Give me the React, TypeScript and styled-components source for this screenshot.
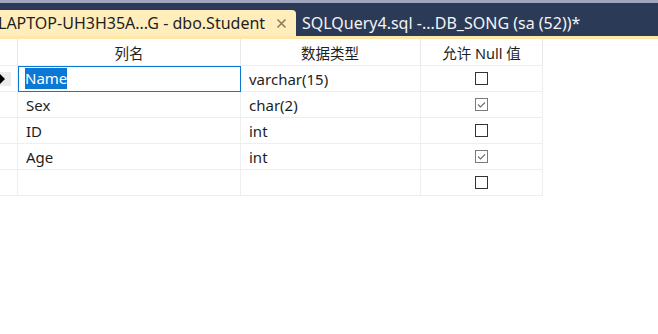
import styled, { createGlobalStyle } from "styled-components";

const Global = createGlobalStyle`
  html, body {
    margin: 0;
    background: #ffffff;
  }
  body {
    font-family: "Noto Sans", "Noto Sans CJK SC", sans-serif;
    color: #1e1e1e;
  }
`;

const TabBar = styled.div`
  display: flex;
  align-items: flex-end;
  height: 36px;
  background: #2b3a57;
  border-top: 3px solid #9ea7bd;
  box-sizing: border-box;
`;

const Tab = styled.div<{ $active?: boolean }>`
  display: flex;
  align-items: center;
  height: 26px;
  padding: 0 9px 0 0;
  margin-left: ${(p) => (p.$active ? "-2px" : "6px")};
  border-radius: 0 4px 0 0;
  background: ${(p) => (p.$active ? "#ffeebc" : "transparent")};
  color: ${(p) => (p.$active ? "#1e1e1e" : "#f4f4f4")};
  font-size: 16px;
  white-space: nowrap;
  width: ${(p) => (p.$active ? "298px" : "auto")};
  box-sizing: border-box;
`;

const Close = styled.svg`
  width: 11px;
  height: 11px;
  flex: none;
  margin-left: auto;
`;

const Strip = styled.div`
  height: 3px;
  background: #ffe8a5;
`;

const Grid = styled.div`
  display: grid;
  grid-template-columns: 18px 223px 180px 122px;
  grid-template-rows: 27px;
  grid-auto-rows: 26px;
  width: 543px;
`;

const HeadCell = styled.div<{ $align?: string }>`
  display: flex;
  align-items: center;
  justify-content: ${(p) => p.$align || "center"};
  font-size: 14.5px;
  border-right: 1px solid #e8e8e8;
  border-bottom: 1px solid #eeeeee;
  box-sizing: border-box;
  padding-left: ${(p) => (p.$align === "flex-start" ? "60px" : "0")};
`;

const Cell = styled.div<{ $selected?: boolean; $center?: boolean }>`
  display: flex;
  align-items: center;
  justify-content: ${(p) => (p.$center ? "center" : "flex-start")};
  padding-left: ${(p) => (p.$center ? "0" : "8px")};
  font-size: 15px;
  border-right: 1px solid #eeeeee;
  border-bottom: 1px solid #eeeeee;
  box-sizing: border-box;
  outline: ${(p) => (p.$selected ? "1px solid #0a78d4" : "none")};
  outline-offset: -1px;
`;

const Gutter = styled.div`
  display: flex;
  align-items: center;
  border-right: 1px solid #eeeeee;
  border-bottom: 1px solid #eeeeee;
  box-sizing: border-box;
`;

const Pointer = styled.div`
  width: 11px;
  height: 14px;
  background: #ececec;
  display: flex;
  align-items: center;
  &::before {
    content: "";
    border-left: 5px solid #000;
    border-top: 5px solid transparent;
    border-bottom: 5px solid transparent;
  }
`;

const Highlight = styled.span`
  background: #0a78d4;
  color: #ffffff;
  padding: 0 0 1px;
  margin-left: -1px;
`;

const Box = styled.svg`
  width: 13px;
  height: 13px;
`;

type Row = { name: string; type: string; nullable: boolean };

const rows: Row[] = [
  { name: "Name", type: "varchar(15)", nullable: false },
  { name: "Sex", type: "char(2)", nullable: true },
  { name: "ID", type: "int", nullable: false },
  { name: "Age", type: "int", nullable: true },
];

function Check({ checked }: { checked: boolean }) {
  return (
    <Box viewBox="0 0 13 13">
      <rect x="0.5" y="0.5" width="12" height="12" fill="#fff" stroke={checked ? "#7a7a7a" : "#333"} />
      {checked && <path d="M3 6.5 L5.5 9 L10 4.5" fill="none" stroke="#6e6e6e" strokeWidth="1.1" />}
    </Box>
  );
}

export default function App() {
  return (
    <>
      <Global />
      <TabBar>
        <Tab $active>
          LAPTOP-UH3H35A...G - dbo.Student
          <Close viewBox="0 0 11 11">
            <path d="M1.5 1.5 L9.5 9.5 M9.5 1.5 L1.5 9.5" stroke="#8c7c5c" strokeWidth="1.6" />
          </Close>
        </Tab>
        <Tab>SQLQuery4.sql -...DB_SONG (sa (52))*</Tab>
      </TabBar>
      <Strip />
      <Grid>
        <HeadCell />
        <HeadCell>列名</HeadCell>
        <HeadCell $align="flex-start">数据类型</HeadCell>
        <HeadCell>允许 Null 值</HeadCell>
        {rows.map((r, i) => (
          <>
            <Gutter key={`g${i}`}>{i === 0 && <Pointer />}</Gutter>
            <Cell key={`n${i}`} $selected={i === 0}>
              {i === 0 ? <Highlight>{r.name}</Highlight> : r.name}
            </Cell>
            <Cell key={`t${i}`}>{r.type}</Cell>
            <Cell key={`c${i}`} $center>
              <Check checked={r.nullable} />
            </Cell>
          </>
        ))}
        <Gutter />
        <Cell />
        <Cell />
        <Cell $center>
          <Check checked={false} />
        </Cell>
      </Grid>
    </>
  );
}
